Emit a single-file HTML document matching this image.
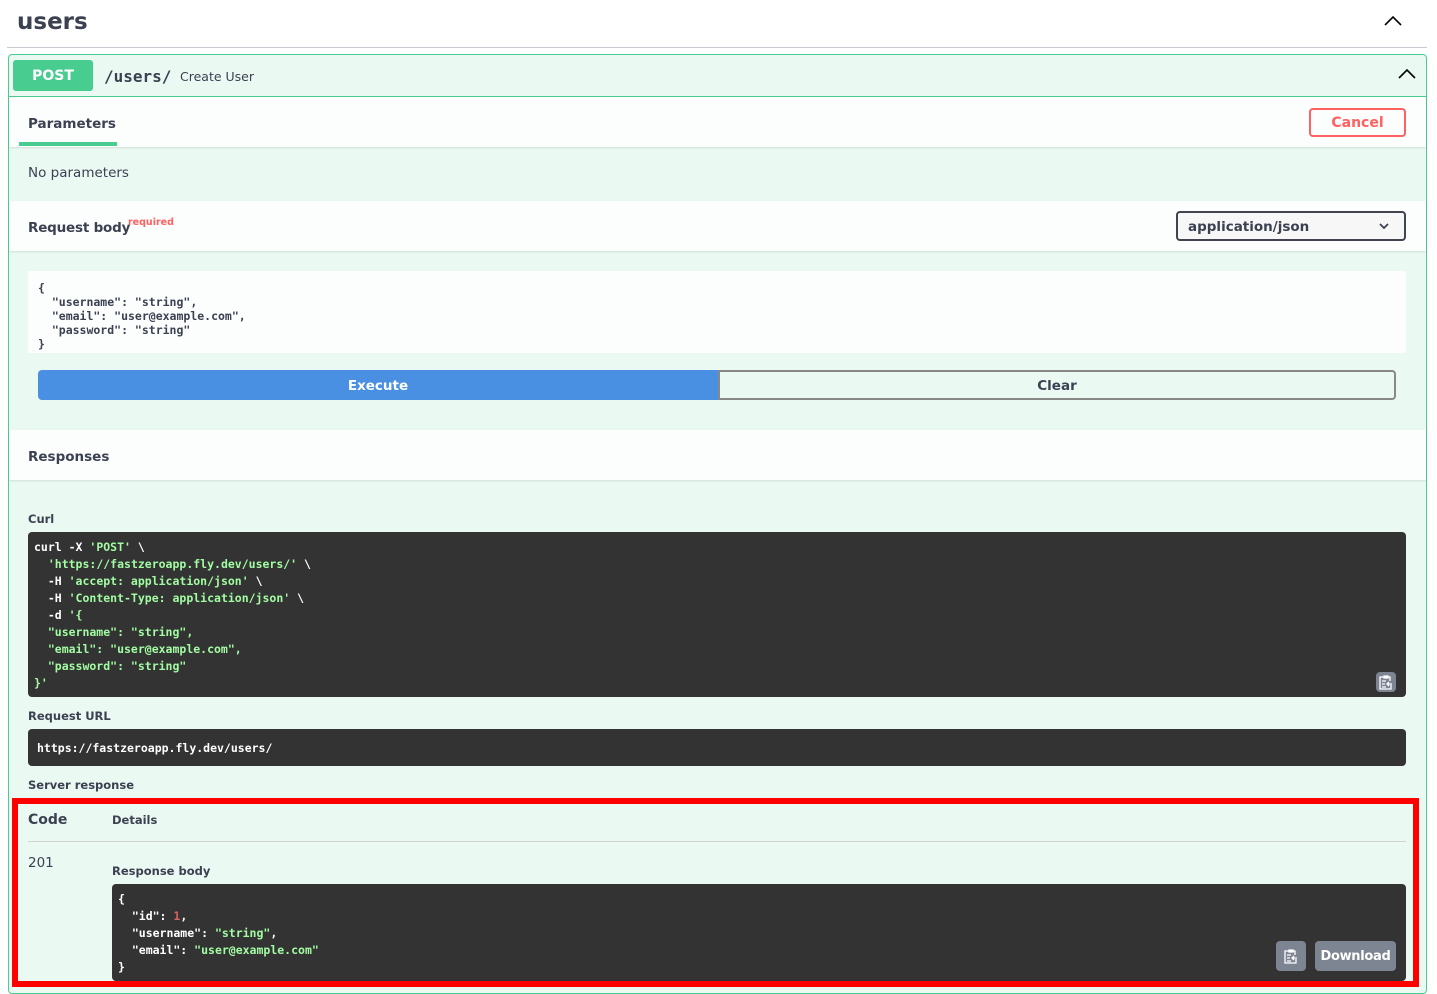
<!DOCTYPE html>
<html><head><meta charset="utf-8"><style>
*{box-sizing:border-box;margin:0;padding:0}
body{width:1437px;height:987px;overflow:hidden;background:#fff;font-family:"DejaVu Sans","Liberation Sans",sans-serif;color:#3b4151;position:relative}
.a{position:absolute}
.mono{font-family:"DejaVu Sans Mono","Liberation Mono",monospace}
.b{font-weight:bold}
.code{background:#333;border-radius:4px;color:#fff;font-size:12px;line-height:17px;white-space:pre}
.s{color:#a2fca2}
.btn{background:#7d8492;border-radius:4px;color:#fff}
</style></head><body>
<div class="a b" style="left:17px;top:9px;font-size:23px;color:#3b4151">users</div>
<svg class="a" style="left:1383px;top:14px" width="20" height="14" viewBox="0 0 20 14"><path d="M2 11L10 3L18 11" stroke="#000" stroke-width="1.6" fill="none"/></svg>
<div class="a" style="left:7px;top:47px;width:1420px;height:1px;background:#c8cad0"></div>

<div class="a" style="left:8px;top:54px;width:1419px;height:940px;border:1px solid #49cc90;border-radius:4px;background:#ebf9f3"></div>
<div class="a" style="left:9px;top:96px;width:1417px;height:1px;background:#49cc90"></div>
<div class="a b" style="left:13px;top:60px;width:80px;height:31px;background:#49cc90;border-radius:3px;color:#fff;font-size:14px;text-align:center;line-height:32px">POST</div>
<div class="a mono b" style="left:104px;top:67px;font-size:16px">/users/</div>
<div class="a" style="left:180px;top:69px;font-size:12.5px">Create User</div>
<svg class="a" style="left:1397px;top:67px" width="20" height="14" viewBox="0 0 20 14"><path d="M2 11L10 3L18 11" stroke="#000" stroke-width="1.6" fill="none"/></svg>

<div class="a" style="left:9px;top:97px;width:1417px;height:50px;background:#fcfdfd;box-shadow:0 1px 2px rgba(0,0,0,.1)"></div>
<div class="a b" style="left:28px;top:116px;font-size:13.5px">Parameters</div>
<div class="a" style="left:19px;top:142px;width:98px;height:4px;background:#49cc90"></div>
<div class="a b" style="left:1309px;top:108px;width:97px;height:29px;border:2px solid #ff6060;border-radius:4px;color:#ff6060;font-size:14px;text-align:center;line-height:27px">Cancel</div>
<div class="a" style="left:28px;top:165px;font-size:13.5px">No parameters</div>

<div class="a" style="left:9px;top:201px;width:1417px;height:50px;background:#fcfdfd;box-shadow:0 1px 2px rgba(0,0,0,.1)"></div>
<div class="a b" style="left:28px;top:220px;font-size:13.5px;letter-spacing:-0.2px">Request body</div>
<div class="a b" style="left:128px;top:217px;font-size:9.5px;color:#ff6060">required</div>
<div class="a b" style="left:1176px;top:211px;width:230px;height:30px;border:2px solid #41444e;border-radius:4px;background:#f7f7f7;font-size:13.5px;line-height:28px;padding-left:10px">application/json</div>
<svg class="a" style="left:1378px;top:221px" width="12" height="10" viewBox="0 0 12 10"><path d="M2 3L6 7L10 3" stroke="#3b4151" stroke-width="1.8" fill="none"/></svg>

<div class="a mono" style="left:28px;top:271px;width:1378px;height:82px;background:#fcfdfd;font-size:11.5px;line-height:14px;padding:10px;white-space:pre;font-weight:600">{
  "username": "string",
  "email": "user@example.com",
  "password": "string"
}</div>
<div class="a b" style="left:38px;top:370px;width:680px;height:30px;background:#4990e2;border-radius:4px 0 0 4px;color:#fff;font-size:13.5px;text-align:center;line-height:32px">Execute</div>
<div class="a b" style="left:718px;top:370px;width:678px;height:30px;border:2px solid #888;border-radius:0 4px 4px 0;font-size:13.5px;text-align:center;line-height:29px">Clear</div>

<div class="a" style="left:9px;top:430px;width:1417px;height:50px;background:#fcfdfd;box-shadow:0 1px 2px rgba(0,0,0,.1)"></div>
<div class="a b" style="left:28px;top:449px;font-size:13.5px">Responses</div>

<div class="a b" style="left:28px;top:512px;font-size:11.5px">Curl</div>
<div class="a code mono b" style="left:28px;top:532px;width:1378px;height:165px;padding:7px 6px;font-size:11.5px">curl -X <span class="s">'POST'</span> \
  <span class="s">'https://fastzeroapp.fly.dev/users/'</span> \
  -H <span class="s">'accept: application/json'</span> \
  -H <span class="s">'Content-Type: application/json'</span> \
  -d <span class="s">'{
  "username": "string",
  "email": "user@example.com",
  "password": "string"
}'</span></div>
<div class="a btn" style="left:1376px;top:672px;width:20px;height:20px"></div>
<svg class="a" style="left:1379px;top:674px" width="14" height="16" viewBox="0 0 14 16"><path d="M3 3H1V15H12V11M3 3H11V7M5 2H9V4H5Z M3 7H7M3 10H6M3 13H7M13 10H8M10 8L8 10L10 12" stroke="#fff" stroke-width="1.3" fill="none"/></svg>

<div class="a b" style="left:28px;top:709px;font-size:11.5px">Request URL</div>
<div class="a code mono b" style="left:28px;top:729px;width:1378px;height:37px;padding:11px 9px;font-size:11.5px">https://fastzeroapp.fly.dev/users/</div>
<div class="a b" style="left:28px;top:778px;font-size:11.5px">Server response</div>

<div class="a" style="left:12px;top:798px;width:1407px;height:189px;border:6px solid #f00"></div>
<div class="a b" style="left:28px;top:812px;font-size:14px">Code</div>
<div class="a b" style="left:112px;top:813px;font-size:11.5px">Details</div>
<div class="a" style="left:28px;top:841px;width:1378px;height:1px;background:#cfd3d3"></div>
<div class="a" style="left:28px;top:855px;font-size:13.5px">201</div>
<div class="a b" style="left:112px;top:864px;font-size:11.5px">Response body</div>
<div class="a code mono b" style="left:112px;top:884px;width:1294px;height:97px;padding:7px 6px;font-size:11.5px">{
  "id": <span style="color:#d36363">1</span>,
  "username": <span class="s">"string"</span>,
  "email": <span class="s">"user@example.com"</span>
}</div>
<div class="a btn" style="left:1276px;top:941px;width:30px;height:30px"></div>
<svg class="a" style="left:1284px;top:948px" width="14" height="16" viewBox="0 0 14 16"><path d="M3 3H1V15H12V11M3 3H11V7M5 2H9V4H5Z M3 7H7M3 10H6M3 13H7M13 10H8M10 8L8 10L10 12" stroke="#fff" stroke-width="1.3" fill="none"/></svg>
<div class="a btn b" style="left:1315px;top:941px;width:81px;height:30px;font-size:13px;text-align:center;line-height:32px;letter-spacing:-0.3px">Download</div>
</body></html>
